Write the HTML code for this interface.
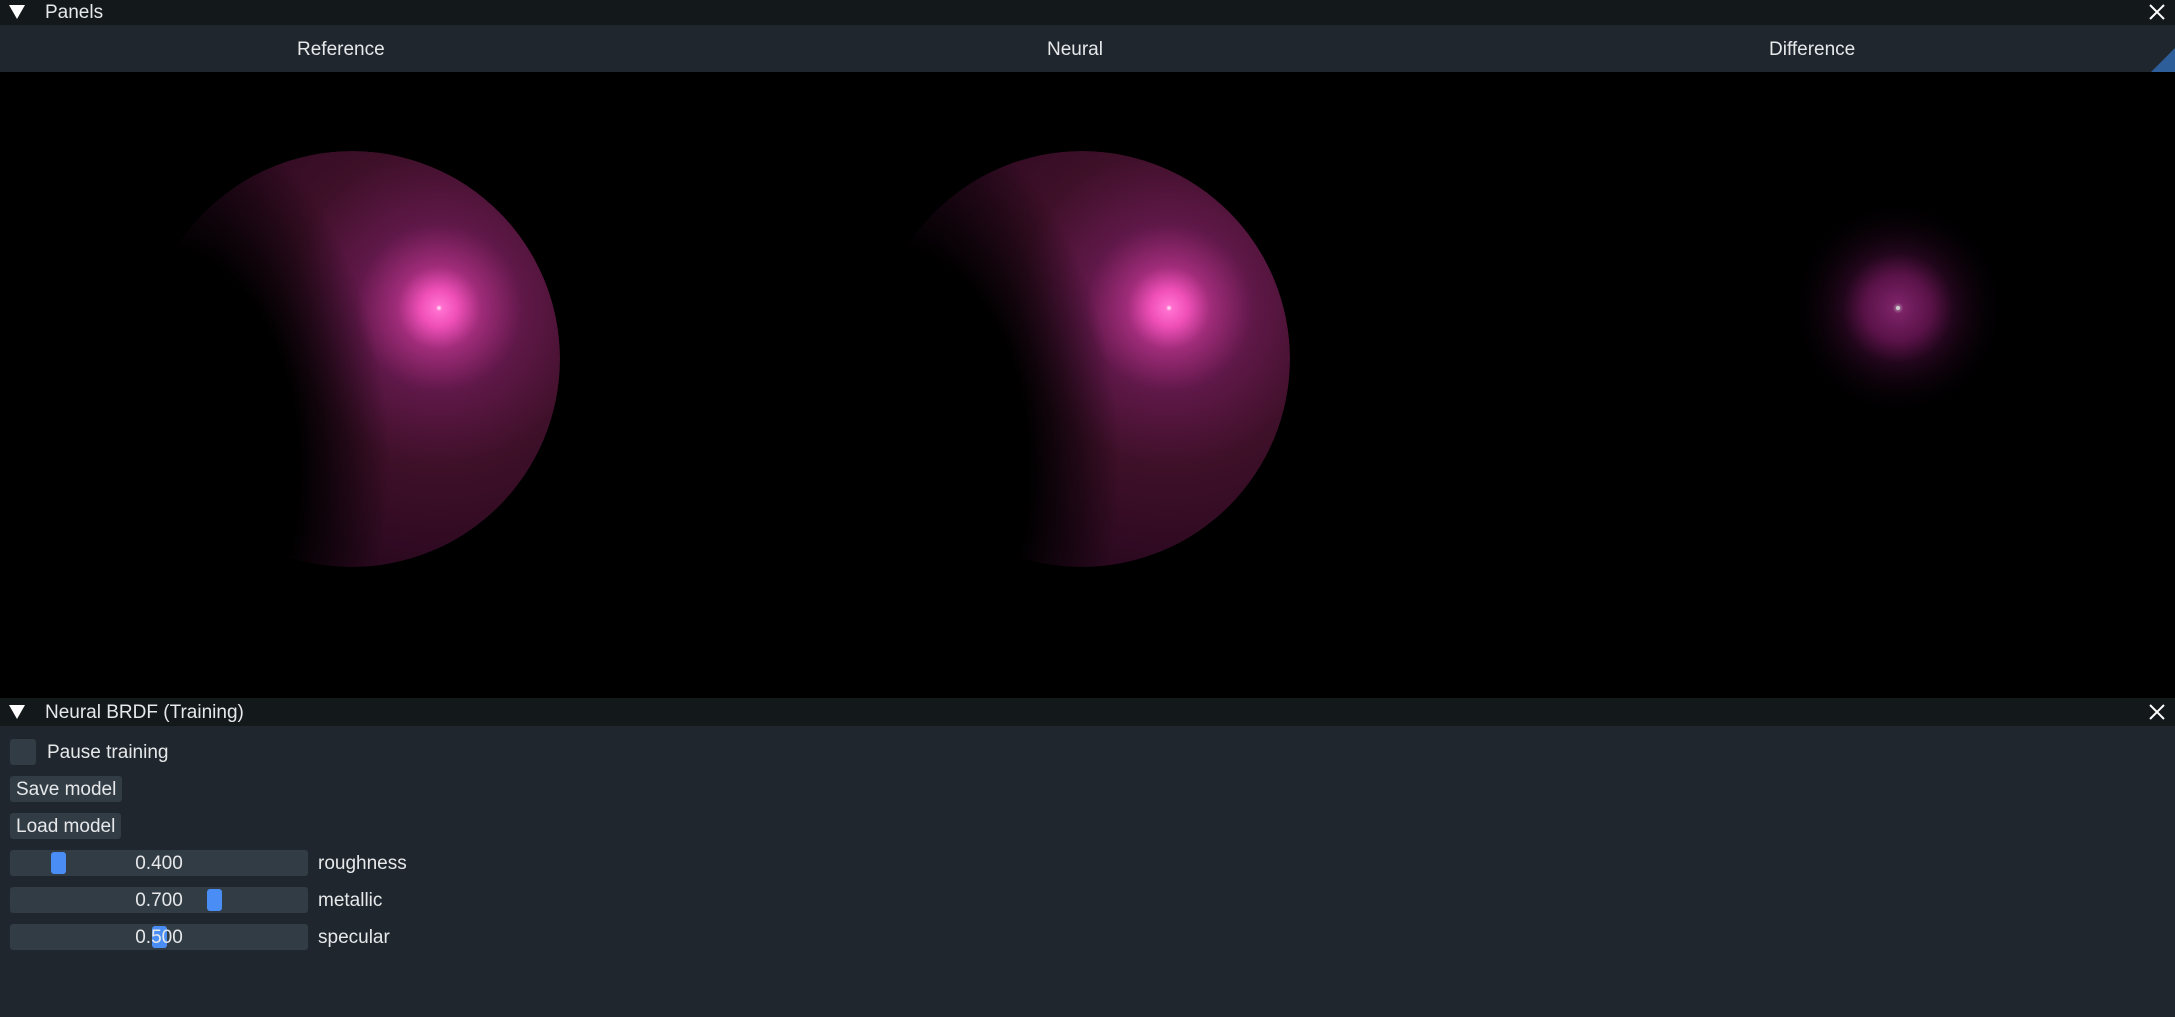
<!DOCTYPE html>
<html><head><meta charset="utf-8"><style>
*{margin:0;padding:0;box-sizing:border-box}
body{width:2175px;height:1017px;background:#1f262d;overflow:hidden;font-family:"Liberation Sans",sans-serif;color:#e6e8ea;position:relative}
.tb{position:absolute;left:0;width:2175px;background:#13181b;font-size:19px}
.tri{position:absolute;left:9px;width:0;height:0;border-left:8px solid transparent;border-right:8px solid transparent;border-top:14px solid #fff}
.x{position:absolute;right:10px;width:16px;height:16px}
.ab{position:absolute}
.btn{position:absolute;left:10px;background:#323c45;border-radius:3px;font-size:19px;padding:0 6px;line-height:28px;height:26px}
.sl{position:absolute;left:10px;width:298px;height:26px;background:#323c45;border-radius:3px;font-size:19px;text-align:center;line-height:28px}
.th{position:absolute;top:2px;width:15px;height:22px;background:#4a8ef5;border-radius:3px}
.lb{position:absolute;left:318px;font-size:19px;line-height:28px}
</style></head><body>
<div class="tb" style="top:0;height:25px">
<div class="tri" style="top:5px"></div>
<div class="ab" style="left:45px;top:2px">Panels</div>
<svg class="x" style="top:4px" viewBox="0 0 16 16"><path d="M1 1L15 15M15 1L1 15" stroke="#fff" stroke-width="2"/></svg>
</div>
<div class="ab" style="top:25px;left:0;width:2175px;height:47px;background:#1f262d;border-radius:0 0 6px 6px;font-size:19px">
<div class="ab" style="left:297px;top:14px">Reference</div>
<div class="ab" style="left:1047px;top:14px">Neural</div>
<div class="ab" style="left:1769px;top:14px">Difference</div>
<svg class="ab" style="right:0;top:23px" width="24" height="24"><path d="M24 0L24 24L0 24Z" fill="#2e5e9a"/></svg>
</div>
<svg class="ab" style="left:0;top:72px" width="2175" height="626" viewBox="0 72 2175 626">
<defs>
<radialGradient id="hl" cx="439" cy="308" r="260" gradientUnits="userSpaceOnUse">
<stop offset="0" stop-color="#fff0fa"/><stop offset="0.012" stop-color="#ff70d0"/><stop offset="0.07" stop-color="#f050b8"/><stop offset="0.16" stop-color="#a02c7a"/><stop offset="0.32" stop-color="#601849"/><stop offset="0.6" stop-color="#3f1029"/><stop offset="1" stop-color="#2c0920"/>
</radialGradient>
<radialGradient id="sh" cx="160" cy="470" r="230" gradientUnits="userSpaceOnUse" gradientTransform="translate(160 470) scale(1 1.6) rotate(-20) translate(-160 -470)">
<stop offset="0" stop-color="#000" stop-opacity="1"/><stop offset="0.6" stop-color="#000" stop-opacity="1"/><stop offset="1" stop-color="#000" stop-opacity="0"/>
</radialGradient>
<radialGradient id="dg" cx="1898" cy="308" r="110" gradientUnits="userSpaceOnUse">
<stop offset="0" stop-color="#b090a8"/><stop offset="0.05" stop-color="#7a2266"/><stop offset="0.3" stop-color="#5a1248"/><stop offset="0.5" stop-color="#22061c"/><stop offset="1" stop-color="#000" stop-opacity="0"/>
</radialGradient>
<clipPath id="c1"><circle cx="352" cy="359" r="208"/></clipPath>
</defs>
<rect x="0" y="72" width="2175" height="626" fill="#000"/>
<g clip-path="url(#c1)"><circle cx="352" cy="359" r="208" fill="url(#hl)"/><rect x="100" y="100" width="500" height="500" fill="url(#sh)"/></g>
<g transform="translate(730 0)"><g clip-path="url(#c1)"><circle cx="352" cy="359" r="208" fill="url(#hl)"/><rect x="100" y="100" width="500" height="500" fill="url(#sh)"/></g></g>
<circle cx="1898" cy="308" r="110" fill="url(#dg)"/>
<circle cx="1898" cy="308" r="2" fill="#d0d0d0"/>
</svg>
<div class="tb" style="top:698px;height:28px">
<div class="tri" style="top:7px"></div>
<div class="ab" style="left:45px;top:4px">Neural BRDF (Training)</div>
<svg class="x" style="top:6px" viewBox="0 0 16 16"><path d="M1 1L15 15M15 1L1 15" stroke="#fff" stroke-width="2"/></svg>
</div>
<div class="ab" style="left:10px;top:739px;width:26px;height:26px;background:#323c45;border-radius:3px"></div>
<div class="ab" style="left:47px;top:739px;font-size:19px;line-height:28px">Pause training</div>
<div class="btn" style="top:776px">Save model</div>
<div class="btn" style="top:813px">Load model</div>
<div class="sl" style="top:850px"><div class="th" style="left:41px"></div><span style="position:relative">0.400</span></div><div class="lb" style="top:850px">roughness</div>
<div class="sl" style="top:887px"><div class="th" style="left:197px"></div><span style="position:relative">0.700</span></div><div class="lb" style="top:887px">metallic</div>
<div class="sl" style="top:924px"><div class="th" style="left:142px"></div><span style="position:relative">0.500</span></div><div class="lb" style="top:924px">specular</div>
</body></html>
